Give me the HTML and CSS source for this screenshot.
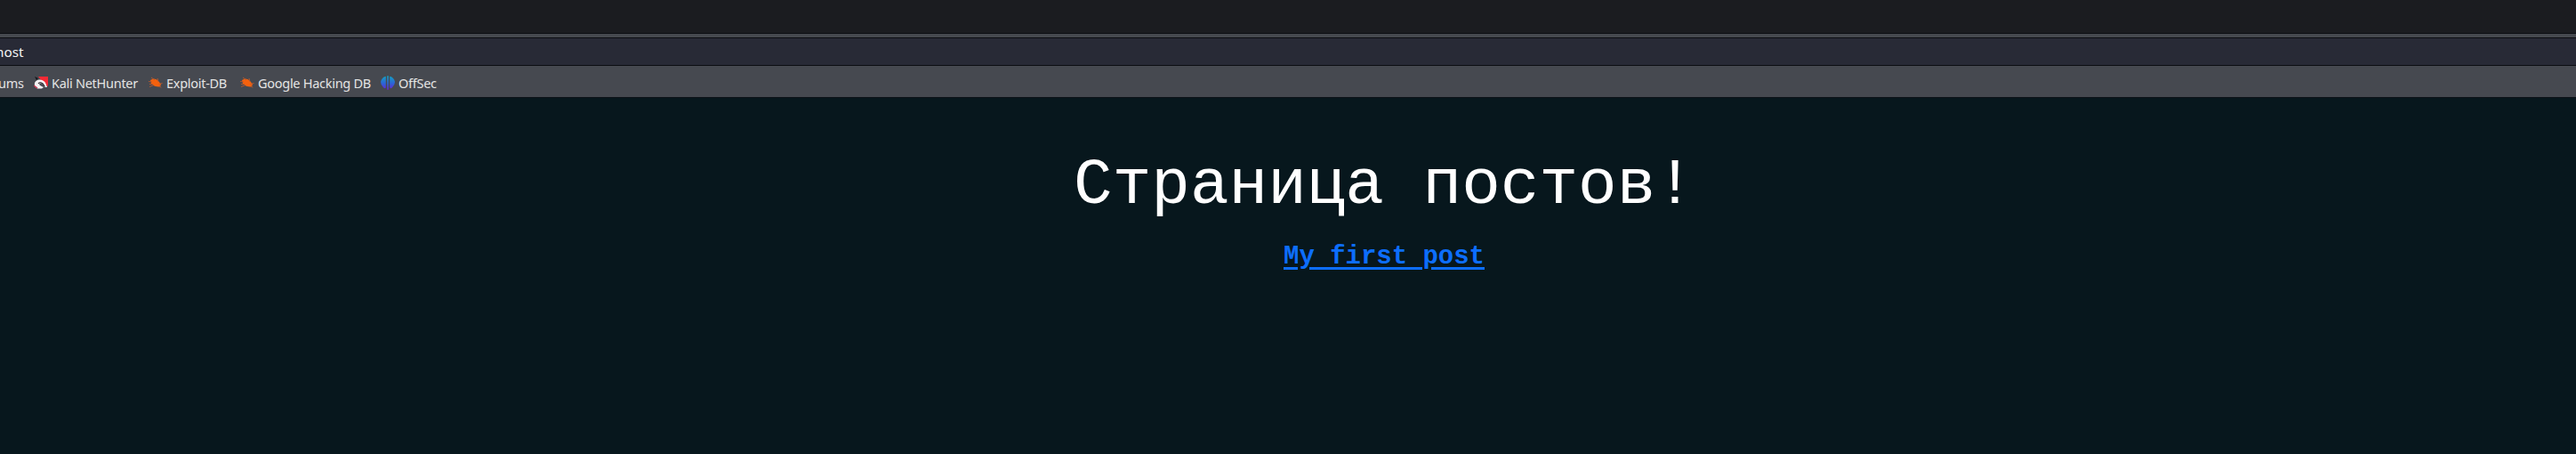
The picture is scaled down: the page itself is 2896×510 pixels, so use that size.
FILE: index.html
```html
<!DOCTYPE html>
<html lang="ru">
<head>
<meta charset="utf-8">
<title>Страница постов!</title>
<link rel="stylesheet" href="styles.css">
</head>
<body>
<div class="tabs"></div>
<div class="gap"></div>
<div class="address"><span>host</span></div>
<nav class="bookmarks">
  <span class="label forums">ums</span>
  <svg class="icon i1" width="16" height="16" viewBox="0 0 16 16"><path d="M5 1H16V12L12 10Z" fill="#f52a35"/><path d="M1 1l4 2-2 2z" fill="#16171b"/><path d="M1 8Q3 4 7 4.500Q12 5 13.500 9L15 13H12Q10 8 7 8.500Q5 10 8 11.500L11 13L9 14.500H4Q0 13 1 8Z" fill="#f5f3f5"/><path d="M5 9Q7 6.500 10 9L12.500 12.500" stroke="#2b2027" stroke-width="1.2" fill="none"/><path d="M0 11l4 3" stroke="#c82d4b" stroke-width="1.3"/></svg>
  <span class="label t1">Kali NetHunter</span>
  <svg class="icon i2" width="16" height="16" viewBox="0 0 16 16"><path d="M2 5L5 3.500Q9 3 11 6L14 9.500L13 12.500Q7 13 3 9Z" fill="#f5610d"/><path d="M0 6.500l4 .5M1 12.500l5-2M3 2l4 3M10 3l1 4M15.500 8.500l-4 1M12 11l2 2.500M1 9.500h4" stroke="#b85a30" stroke-width=".9"/></svg>
  <span class="label t2">Exploit-DB</span>
  <svg class="icon i3" width="16" height="16" viewBox="0 0 16 16"><path d="M2 5L5 3.500Q9 3 11 6L14 9.500L13 12.500Q7 13 3 9Z" fill="#f5610d"/><path d="M0 6.500l4 .5M1 12.500l5-2M3 2l4 3M10 3l1 4M15.500 8.500l-4 1M12 11l2 2.500M1 9.500h4" stroke="#b85a30" stroke-width=".9"/></svg>
  <span class="label t3">Google Hacking DB</span>
  <svg class="icon i4" width="16" height="16" viewBox="0 0 16 16"><defs><linearGradient id="g" x1="0" y1="0" x2="0" y2="16" gradientUnits="userSpaceOnUse"><stop stop-color="#12a5c0"/><stop offset=".55" stop-color="#2d63d8"/><stop offset="1" stop-color="#6a1fd0"/></linearGradient></defs><path d="M5.800 .8V13.500Q4 15 2.800 13Q0 10 0 7Q1 2 5.800 .8ZM7.200 .3H8.800V15.700H7.200ZM10.200 .8V13.500Q12 15 13.200 13Q16 10 16 7Q15 2 10.200 .8Z" fill="url(#g)"/></svg>
  <span class="label t4">OffSec</span>
</nav>
<main class="page">
  <h1>Страница постов!</h1>
  <a class="post" href="#">My first post</a>
</main>
</body>
</html>
```
FILE: styles.css
```css
* { box-sizing: border-box; }
body { margin: 0; height: 510px; display: flex; flex-direction: column; overflow: hidden; background: #07171d; font-family: "Noto Sans", sans-serif; }
.tabs { height: 38px; background: #1b1c20; border-bottom: 1px solid #0c0d12; }
.gap { height: 5px; background: #46494f; border-bottom: 1px solid #0c0d12; }
.address { height: 31px; background: #282a36; border-bottom: 1px solid #0c0d12; color: #f2f2f2; font-size: 15.3px; line-height: 31px; }
.address span { display: block; margin-left: -5px; }
.bookmarks { height: 36px; padding-top: 3px; background: #464950; border-bottom: 1px solid #0c1218; display: flex; align-items: center; color: #e4e4e4; font-size: 14.5px; letter-spacing: -.28px; white-space: nowrap; }
.label { flex: none; line-height: 20px; }
.icon { flex: none; margin-right: 4px; margin-bottom: 1px; }
.forums { width: 40px; margin-left: -2px; letter-spacing: -.2px; }
.t1 { width: 109px; }
.t2 { width: 83px; }
.t3 { width: 138px; }
.page { flex: 1; padding: 55px 0 0 216px; display: flex; flex-direction: column; align-items: center; font-family: "Liberation Mono", monospace; }
h1 { margin: 0; color: #fff; font-size: 72.7px; font-weight: 400; line-height: 87px; }
.post { margin-top: 17px; color: #0d6efd; font-size: 28.97px; font-weight: 700; line-height: 40px; text-decoration-thickness: 3px; text-underline-offset: 4px; }
```
